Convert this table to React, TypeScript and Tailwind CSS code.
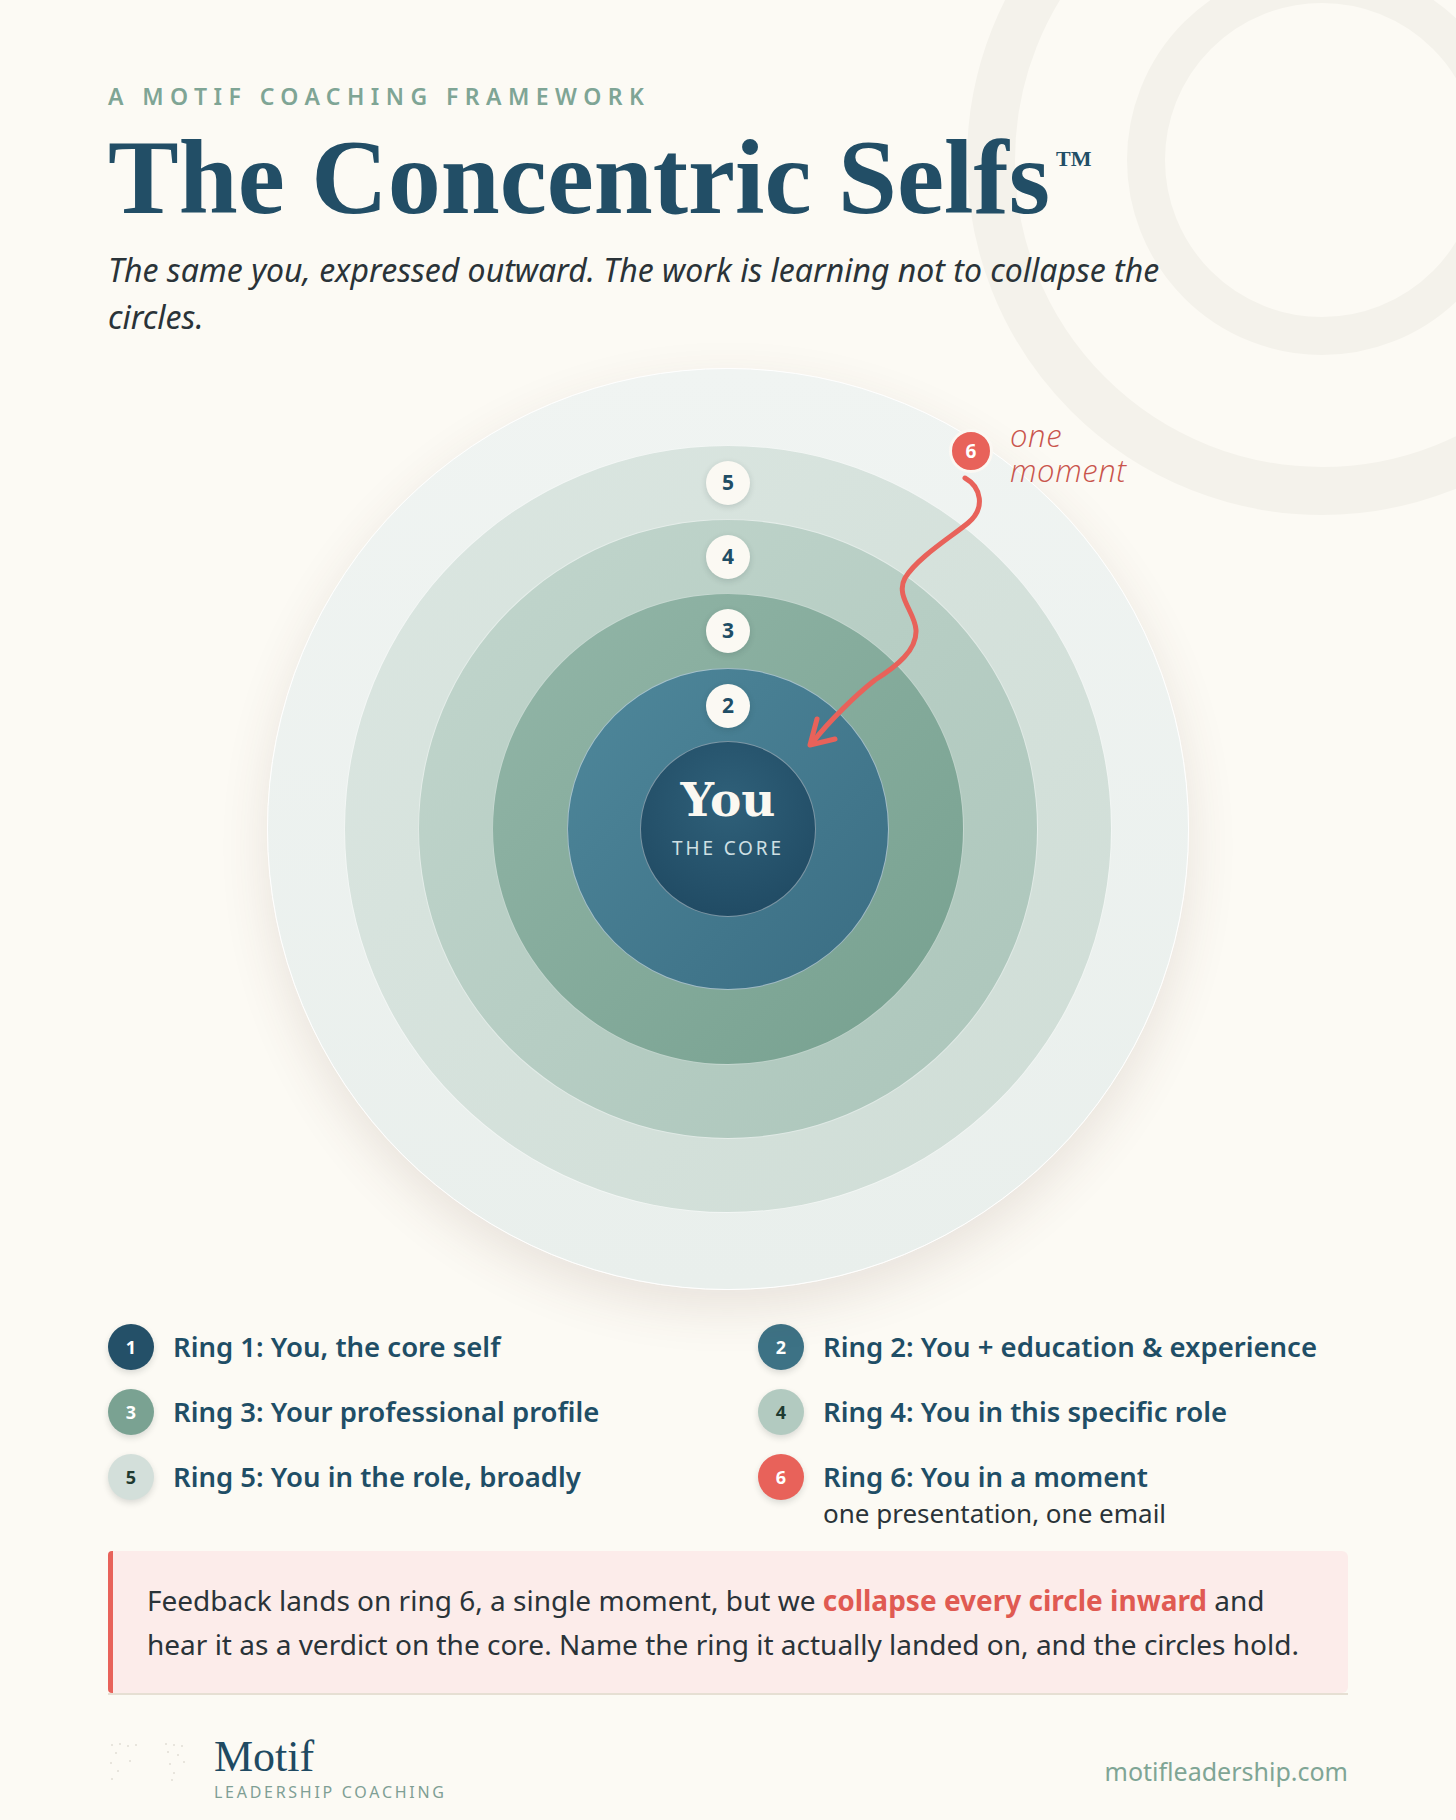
import React from "react";

const sans = { fontFamily: "'Noto Sans', 'Open Sans', sans-serif" };
const serif = { fontFamily: "'Liberation Serif', 'DejaVu Serif', serif" };
const roundSerif = { fontFamily: "'DejaVu Serif', 'Liberation Serif', serif" };

// numbered pill that sits at the top of each ring band
function RingBadge({ n }: { n: number }) {
  return (
    <div
      className="absolute left-1/2 top-[15px] z-10 flex h-[44px] w-[44px] -translate-x-1/2 items-center justify-center rounded-full bg-[#fbf9f3] text-[21px] font-bold text-[#1f4e66] shadow-[0_2px_6px_rgba(20,40,40,0.15)]"
      style={sans}
    >
      {n}
    </div>
  );
}

const legend = [
  { n: 1, label: "Ring 1: You, the core self", badge: "bg-[#245068] text-white" },
  { n: 2, label: "Ring 2: You + education & experience", badge: "bg-[#3d7285] text-white" },
  { n: 3, label: "Ring 3: Your professional profile", badge: "bg-[#7aa292] text-white" },
  { n: 4, label: "Ring 4: You in this specific role", badge: "bg-[#b2cac0] text-[#1f3a30]" },
  { n: 5, label: "Ring 5: You in the role, broadly", badge: "bg-[#d3dfda] text-[#1f3a30]" },
  { n: 6, label: "Ring 6: You in a moment", badge: "bg-[#e8625a] text-white", sub: "one presentation, one email" },
];

function LegendItem({ item }: { item: (typeof legend)[number] }) {
  return (
    <div className="flex items-start gap-[19px]">
      <div
        className={`flex h-[46px] w-[46px] shrink-0 items-center justify-center rounded-full text-[18px] font-bold shadow-[0_3px_6px_rgba(30,40,40,0.15)] ${item.badge}`}
      >
        {item.n}
      </div>
      <div>
        <p className="text-[27.5px] font-semibold leading-[46px] text-[#1f4e66]">{item.label}</p>
        {item.sub && <p className="text-[26px] leading-[26px] text-[#2a3338]">{item.sub}</p>}
      </div>
    </div>
  );
}

export default function App() {
  return (
    <div className="relative min-h-[1820px] w-full overflow-hidden bg-[#fcfaf4]" style={sans}>
      {/* decorative rings, top right */}
      <div className="pointer-events-none absolute left-[967px] top-[-195px] h-[710px] w-[710px] rounded-full border-[48px] border-[#f4f2eb]" />
      <div className="pointer-events-none absolute left-[1127px] top-[-35px] h-[390px] w-[390px] rounded-full border-[38px] border-[#f4f2eb]" />

      <div className="relative px-[108px] pt-[82px]">
        <p className="text-[23px] font-semibold uppercase leading-[28px] tracking-[0.28em] text-[#7fa595]">
          A Motif Coaching Framework
        </p>
        <h1
          className="mt-[16px] text-[106px] font-bold leading-[104px] text-[#224e66]"
          style={serif}
        >
          The Concentric Selfs
          <sup className="relative top-[22px] ml-[6px] align-top text-[22px] font-bold leading-none">TM</sup>
        </h1>
        <p className="mt-[16px] max-w-[1110px] text-[32px] italic leading-[47px] text-[#2a3338]">
          The same you, expressed outward. The work is learning not to collapse the circles.
        </p>

        {/* concentric diagram */}
        <div className="relative mx-auto mt-[28px] h-[922px] w-[922px]">
          <div className="flex h-full w-full items-center justify-center rounded-full border border-white bg-linear-to-b from-[#f0f4f2] to-[#e9efec] shadow-[0_18px_50px_rgba(90,60,50,0.12)]">
            <div className="relative flex h-[768px] w-[768px] items-center justify-center rounded-full border border-white/70 bg-linear-to-br from-[#dbe6e1] to-[#cfddd6]">
              <RingBadge n={5} />
              <div className="relative flex h-[620px] w-[620px] items-center justify-center rounded-full border border-white/60 bg-linear-to-br from-[#c2d6cd] to-[#abc5ba]">
                <RingBadge n={4} />
                <div className="relative flex h-[472px] w-[472px] items-center justify-center rounded-full border border-white/50 bg-linear-to-br from-[#93b6a8] to-[#76a08f]">
                  <RingBadge n={3} />
                  <div className="relative flex h-[322px] w-[322px] items-center justify-center rounded-full border border-white/50 bg-linear-to-br from-[#4f889b] to-[#3a6d83]">
                    <RingBadge n={2} />
                    <div className="flex h-[176px] w-[176px] flex-col items-center justify-center gap-[12px] rounded-full border border-white/40 bg-[radial-gradient(circle_at_50%_35%,#2f6079,#1d465f)] pb-[24px]">
                      <span className="text-[47px] font-bold leading-[50px] text-[#fbf8f1]" style={roundSerif}>
                        You
                      </span>
                      <span className="text-[19px] uppercase leading-[22px] tracking-[0.15em] text-[#cfe0e4]">
                        The core
                      </span>
                    </div>
                  </div>
                </div>
              </div>
            </div>
          </div>

          {/* the moment arrow */}
          <svg className="pointer-events-none absolute inset-0 z-20" width="922" height="922" viewBox="0 0 922 922" fill="none">
            <path
              d="M698 110 C714 119 719 140 701 155 C684 169 650 190 638 210 C628 228 648 244 649 262 C650 282 630 298 608 312 C590 326 562 353 546 374"
              stroke="#e8625a"
              strokeWidth="5"
              strokeLinecap="round"
            />
            <path d="M550 351 L543 377 L568 371" stroke="#e8625a" strokeWidth="5" strokeLinecap="round" strokeLinejoin="round" />
          </svg>
          <div className="absolute left-[682px] top-[61px] z-20 flex h-[44px] w-[44px] items-center justify-center rounded-full border-[3px] border-[#fbf8f3] bg-[#e8625a] text-[19px] font-bold text-white">
            6
          </div>
          <div
            className="absolute left-[743px] top-[50px] z-20 text-[31px] font-light italic leading-[35px] tracking-[0.02em] text-[#c9544c]"
            style={{ fontFamily: "'Open Sans', sans-serif" }}
          >
            one
            <br />
            moment
          </div>
        </div>

        {/* legend */}
        <div className="mt-[34px] grid grid-cols-[650px_1fr] gap-y-[19px]">
          {legend.map((item) => (
            <LegendItem key={item.n} item={item} />
          ))}
        </div>

        {/* callout */}
        <div className="mt-[25px] rounded-l-[4px] rounded-r-[6px] border-l-[5px] border-[#e8625a] bg-[#fcecea] px-[34px] py-[27px] text-[28px] leading-[44px] text-[#2a3338]">
          <p className="max-w-[1155px]">
            Feedback lands on ring 6, a single moment, but we{" "}
            <span className="font-bold text-[#e05a52]">collapse every circle inward</span> and hear it as a verdict on
            the core. Name the ring it actually landed on, and the circles hold.
          </p>
        </div>
        <div className="h-[2px] bg-[#e6dfd3]" />

        {/* footer */}
        <div className="mt-[40px] flex items-start justify-between pb-[14px]">
          <div className="flex items-start gap-[22px]">
            <svg width="84" height="46" viewBox="0 0 84 46" className="mt-[4px] opacity-50">
              {[
                [4, 6], [12, 5], [20, 7], [28, 6], [58, 5], [66, 6], [74, 7], [8, 14], [60, 13], [70, 16],
                [3, 24], [22, 22], [62, 25], [76, 23], [10, 32], [66, 34], [4, 40], [64, 41],
              ].map(([x, y], i) => (
                <circle key={i} cx={x} cy={y} r="1" fill="#c9c4ba" />
              ))}
            </svg>
            <div>
              <p className="text-[44px] leading-[44px] text-[#1f4a62]" style={serif}>
                Motif
              </p>
              <p className="mt-[3px] text-[16px] uppercase leading-[20px] tracking-[0.17em] text-[#7f9f94]">
                Leadership Coaching
              </p>
            </div>
          </div>
          <p className="mt-[20px] text-[25px] leading-[32px] text-[#7fa595]">motifleadership.com</p>
        </div>
      </div>
    </div>
  );
}
